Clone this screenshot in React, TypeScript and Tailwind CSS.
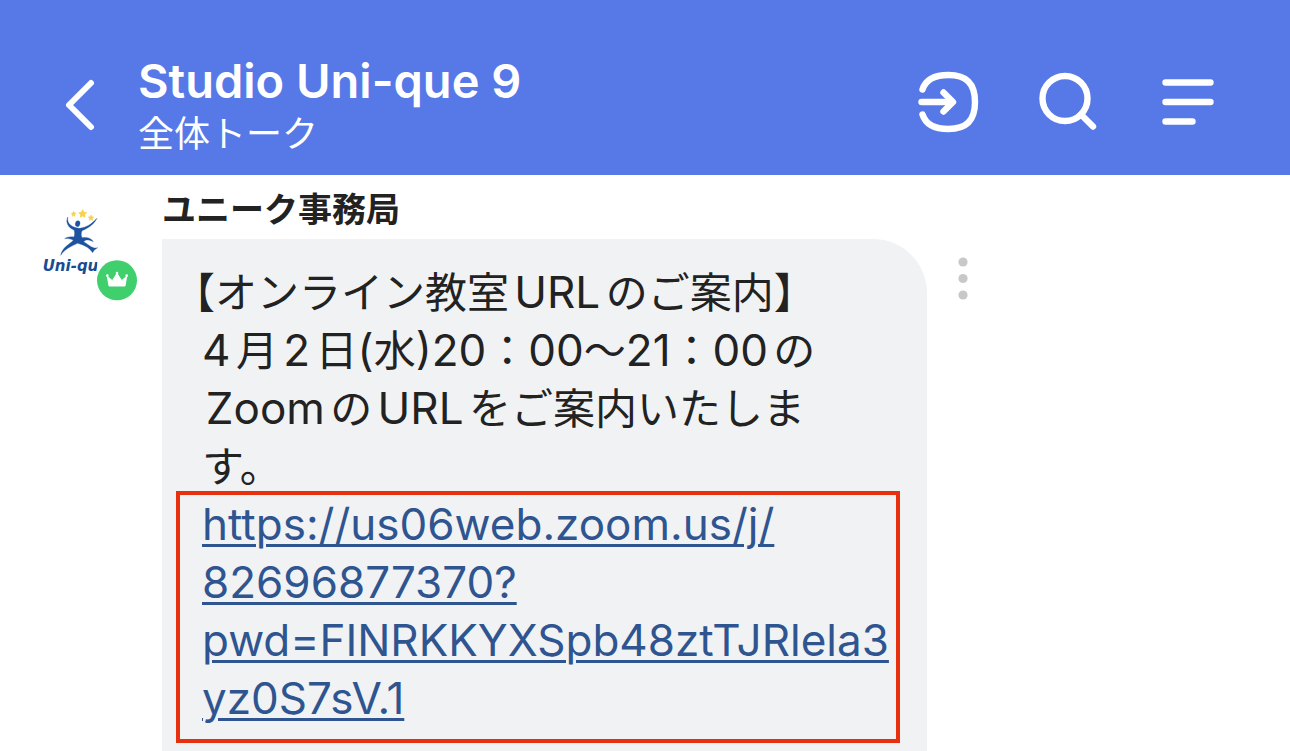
import React from 'react';

const MEETING_URL = 'https://us06web.zoom.us/j/82696877370?pwd=FINRKKYXSpb48ztTJRlela3yz0S7sV.1';
const URL_LINES = ['https://us06web.zoom.us/j/', '82696877370?', 'pwd=FINRKKYXSpb48ztTJRlela3', 'yz0S7sV.1'];

const Header: React.FC = () => (
  <header className="flex h-[175px] items-start bg-[#5779e8] pl-[60px] pr-[68px] text-white">
    <button aria-label="戻る" className="mt-[76px] w-[40px]">
      <svg width="40" height="58" viewBox="0 0 40 58" fill="none" stroke="currentColor" strokeWidth="6" strokeLinecap="round" strokeLinejoin="round">
        <path d="M31 7 9 29l22 22" />
      </svg>
    </button>

    <div className="ml-[38px] mt-[53px] flex-1">
      <h1 className="text-[47px] font-semibold leading-[56px]">Studio Uni-que 9</h1>
      <p className="text-[36px] leading-[50px]">全体トーク</p>
    </div>

    <nav className="mt-[68px] flex gap-[52px]">
      <button aria-label="入室">
        <svg width="68" height="68" viewBox="0 0 68 68" fill="none" stroke="currentColor" strokeWidth="6.4" strokeLinecap="round" strokeLinejoin="round">
          <path d="M8.500 21.500C11.500 12 20 7 34.500 7C52 7 61 15 61 34S52 61 34.500 61C20 61 11.500 56 8.500 46.500" />
          <path d="M7.500 34H37" />
          <path d="M29.500 24.500 39 34l-9.500 9.500" />
        </svg>
      </button>
      <button aria-label="検索">
        <svg width="68" height="68" viewBox="0 0 68 68" fill="none" stroke="currentColor" strokeWidth="6.4" strokeLinecap="round">
          <circle cx="31" cy="30.500" r="22.500" />
          <path d="m47 46.500 12 12" />
        </svg>
      </button>
      <button aria-label="メニュー">
        <svg width="68" height="68" viewBox="0 0 68 68" fill="none" stroke="currentColor" strokeWidth="6.4" strokeLinecap="round">
          <path d="M11.500 14.500H56.500M11.500 34H56.500M11.500 53.500H38.500" />
        </svg>
      </button>
    </nav>
  </header>
);

const Avatar: React.FC = () => (
  <svg width="98" height="96" viewBox="0 0 294 288" role="img" aria-label="Uni-que" className="shrink-0">
    {/* Stars */}
    <g fill="#f6d24a" stroke="#f6d24a" strokeWidth="2" strokeLinejoin="round">
      <path d="m128 14 4 8 8 1-6 6 1 8-7-4-7 4 1-8-6-6 8-1z" />
      <path d="m101 19 2 5 5 1-4 4 1 5-4-3-5 3 1-5-3-4 5-1z" />
      <path d="m153 30 2 5 6 1-4 4 1 6-5-3-5 3 1-6-4-4 6-1z" />
    </g>
    {/* Figure */}
    <g fill="#1d52a0" stroke="#1d52a0" strokeWidth="1">
      <ellipse cx="113" cy="56" rx="7" ry="9" transform="rotate(10 113 56)" />
      <path d="M83 36C76 52 84 68 102 75C105 84 104 90 102 96C90 94 82 96 74 101C86 100 94 102 100 106C86 120 67 127 62 151C75 131 93 125 112 115C128 119 145 125 158 143C162 134 168 131 173 128C159 132 151 123 131 110C136 103 148 104 160 110C153 98 140 96 126 98C123 91 123 84 126 77C145 70 162 58 171 40C155 57 139 68 119 70C99 68 80 59 83 36Z" />
    </g>
    <clipPath id="logo-clip">
      <rect x="0" y="150" width="172" height="70" />
    </clipPath>
    <text x="8" y="198" clipPath="url(#logo-clip)" fill="#174b94" fontSize="45" fontWeight="700" fontStyle="italic" className="font-['DejaVu_Sans',sans-serif]">
      Uni-que
    </text>
    {/* Owner badge */}
    <circle cx="231" cy="226" r="60" fill="#3fcf6c" />
    <path d="M207 243h48l5-29-15 13-14-22-14 22-15-13z" fill="#fff" stroke="#fff" strokeWidth="3" strokeLinejoin="round" />
    <g fill="#fff">
      <circle cx="202" cy="212" r="4" />
      <circle cx="231" cy="204" r="4" />
      <circle cx="260" cy="212" r="4" />
    </g>
  </svg>
);

// Latin runs are set slightly larger than the Japanese text around them
const Latin: React.FC<{ children: React.ReactNode }> = ({ children }) => (
  <span className="text-[44px] leading-none">{children}</span>
);

const Message: React.FC = () => (
  <article className="flex flex-1 pl-[40px]">
    <div className="w-[122px] shrink-0 pt-[30px]">
      <Avatar />
    </div>

    <div className="flex min-w-0 max-w-[765px] flex-1 flex-col">
      <h2 className="pb-[5px] pt-[11px] text-[34px] font-bold leading-[48px] text-[#222]">ユニーク事務局</h2>

      <div className="flex-1 rounded-tr-[54px] bg-[#f1f2f4] pb-[8px] pl-[14px] pr-[27px] pt-[25px] text-[44px] leading-[58px]">
        <div className="whitespace-nowrap pl-[26px] text-[42px] text-[#222]">
          <p className="-indent-2 [font-feature-settings:'halt']">【オンライン教室<Latin>URL</Latin>のご案内】</p>
          <p><Latin>4</Latin>月<Latin>2</Latin>日<Latin>(</Latin>水<Latin>)20</Latin>：<Latin>00</Latin>〜<Latin>21</Latin>：<Latin>00</Latin>の</p>
          <p>{'\u200A'}<Latin>Zoom</Latin>の<Latin>URL</Latin>をご案内いたしま</p>
          <p>す。</p>
        </div>
        <div className="-mt-[5px] border-4 border-[#e8300f] px-[22px] pb-[12px]">
          <a href={MEETING_URL} className="block text-[#2f5591] underline decoration-[3px] underline-offset-[4px]">
            {URL_LINES.map((line) => (
              <span key={line} className="block">{line}</span>
            ))}
          </a>
        </div>
      </div>
    </div>

    <button aria-label="その他" className="ml-[24px] mt-[76px] self-start text-[#c8c8c8]">
      <svg width="24" height="56" viewBox="0 0 24 56" fill="currentColor">
        <circle cx="12" cy="11" r="4.600" />
        <circle cx="12" cy="27.500" r="4.600" />
        <circle cx="12" cy="44" r="4.600" />
      </svg>
    </button>
  </article>
);

export default function App() {
  return (
    <main lang="ja" className="flex min-h-screen flex-col bg-white font-['Inter','Noto_Sans_CJK_JP',sans-serif] [text-autospace:normal]">
      <Header />
      <Message />
    </main>
  );
}
